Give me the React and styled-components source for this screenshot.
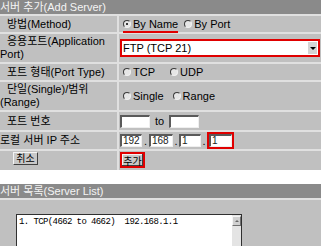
import React from 'react';
import styled, {createGlobalStyle} from 'styled-components';

const GlobalStyle = createGlobalStyle`
  body {
    margin: 0;
    background: #fff;
    font-family: "Liberation Sans", "Noto Sans CJK KR", sans-serif;
    font-size: 11px;
    color: #000;
  }
`;

const Page = styled.div`
  width: 321px;
  height: 246px;
  overflow: hidden;
`;

const FormGrid = styled.div`
  display: grid;
  grid-template-columns: 117px 1fr;
  grid-template-rows: 14px 16px 28px 16px 28px 18px 17px 19px;
  gap: 2px;
  background: #e0e0e0;
`;

const SectionHeader = styled.div`
  grid-column: 1 / -1;
  background: #8a8a8a;
  color: #f4f4f4;
  font-size: 11px;
  line-height: 14px;
  height: 14px;
  white-space: nowrap;
`;

const LabelCell = styled.div`
  background: #c0c0c0;
  display: flex;
  align-items: ${p => p.$top ? 'flex-start' : 'center'};
  text-indent: ${p => p.$indent ?? 7}px;
  line-height: 13px;
  white-space: nowrap;
`;

const FieldCell = styled.div`
  background: #c0c0c0;
  display: flex;
  align-items: ${p => p.$top ? 'flex-start' : 'center'};
  padding-left: 1px;
  white-space: nowrap;
`;

const Options = styled.div`
  display: flex;
  align-items: center;
  gap: ${p => p.$gap}px;
  margin-left: 3px;
`;

const Option = styled.label`
  display: inline-flex;
  align-items: center;
  gap: 2px;
  height: 14px;
  border-bottom: ${p => p.$marked ? '2px solid #e00000' : '0'};
  margin-bottom: ${p => p.$marked ? '-2px' : '0'};
`;

const Radio = styled.span`
  position: relative;
  width: 6px;
  height: 6px;
  border-radius: 50%;
  border: 1px solid;
  border-color: #3a3a3a #f0f0f0 #f0f0f0 #3a3a3a;
  background: #e6e6e6;
  &::after {
    content: '';
    display: ${p => p.$checked ? 'block' : 'none'};
    position: absolute;
    left: 2px;
    top: 2px;
    width: 2px;
    height: 2px;
    border-radius: 50%;
    background: #000;
  }
`;

const Select = styled.div`
  display: flex;
  align-items: center;
  justify-content: space-between;
  width: 195px;
  height: 14px;
  border: 2px solid #e00000;
  background: #fff;
  padding-left: 1px;
`;

const SelectArrow = styled.span`
  width: 9px;
  height: 12px;
  margin-right: 1px;
  display: flex;
  align-items: center;
  justify-content: center;
  background: #d4d4d4;
  &::before {
    content: '';
    border-left: 3px solid transparent;
    border-right: 3px solid transparent;
    border-top: 3px solid #000;
  }
`;

const TextBox = styled.span`
  display: inline-block;
  box-sizing: border-box;
  width: ${p => p.$w}px;
  height: 13px;
  background: #fff;
  border-style: solid;
  border-width: 2px 1px 1px 2px;
  border-color: #5a5a5a #efefef #efefef #5a5a5a;
  font-size: 10px;
  line-height: 10px;
  padding-left: 1px;
  color: #222;
`;

const Marked = styled.span`
  display: inline-flex;
  border: 2px solid #e00000;
`;

const Sep = styled.span`
  display: inline-block;
  width: ${p => p.$w}px;
  text-align: center;
`;

const Button = styled.span`
  display: inline-flex;
  align-items: center;
  justify-content: center;
  box-sizing: border-box;
  width: 25px;
  height: 13px;
  background: #c8c8c8;
  border: 1px solid;
  border-color: #f4f4f4 #404040 #404040 #f4f4f4;
  font-size: 10px;
  margin-left: ${p => p.$left ?? 0}px;
  margin-top: 1px;
`;

const RedButton = styled(Button)`
  height: 16px;
  border: 2px solid #e00000;
  box-shadow: inset -1px -1px #404040, inset 1px 1px #f4f4f4;
`;

const Spacer = styled.div`
  height: 14px;
  background: #fff;
`;

const ListSection = styled.div`
  border-top: 2px solid #e0e0e0;
  background: #c0c0c0;
  height: 60px;
  padding: 14px 0 0 16px;
`;

const ListBox = styled.div`
  display: flex;
  width: 226px;
  height: 60px;
  box-sizing: border-box;
  background: #fff;
  border: 1px solid #303030;
`;

const ListText = styled.div`
  flex: 1;
  padding: 2px 0 0 2px;
  font-family: "Liberation Mono", monospace;
  font-size: 9px;
  letter-spacing: -0.6px;
  white-space: pre;
`;

const ScrollBar = styled.div`
  width: 9px;
  background: #e4e4e4;
`;

const ScrollUp = styled.div`
  height: 8px;
  margin-top: 1px;
  background: #d0d0d0;
  border: 1px solid;
  border-color: #f4f4f4 #707070 #707070 #f4f4f4;
  display: flex;
  align-items: center;
  justify-content: center;
  &::before {
    content: '';
    border-left: 2px solid transparent;
    border-right: 2px solid transparent;
    border-bottom: 2px solid #666;
  }
`;

export default function App() {
  return (
    <Page>
      <GlobalStyle />
      <FormGrid>
        <SectionHeader>서버 추가(Add Server)</SectionHeader>

        <LabelCell>방법(Method)</LabelCell>
        <FieldCell>
          <Options $gap={6}>
            <Option $marked><Radio $checked />By Name</Option>
            <Option><Radio />By Port</Option>
          </Options>
        </FieldCell>

        <LabelCell>
          <div>응용포트(Application<br />Port)</div>
        </LabelCell>
        <FieldCell>
          <Select>FTP (TCP 21)<SelectArrow /></Select>
        </FieldCell>

        <LabelCell>포트 형태(Port Type)</LabelCell>
        <FieldCell>
          <Options $gap={15}>
            <Option><Radio />TCP</Option>
            <Option><Radio />UDP</Option>
          </Options>
        </FieldCell>

        <LabelCell>
          <div>단일(Single)/범위<br />(Range)</div>
        </LabelCell>
        <FieldCell>
          <Options $gap={9}>
            <Option><Radio />Single</Option>
            <Option><Radio />Range</Option>
          </Options>
        </FieldCell>

        <LabelCell>포트 번호</LabelCell>
        <FieldCell>
          <TextBox $w={30} />
          <Sep $w={19}>to</Sep>
          <TextBox $w={30} />
        </FieldCell>

        <LabelCell $indent={0}>로컬 서버 IP 주소</LabelCell>
        <FieldCell>
          <TextBox $w={22}>192</TextBox>
          <Sep $w={7}>.</Sep>
          <TextBox $w={24}>168</TextBox>
          <Sep $w={6}>.</Sep>
          <TextBox $w={22}>1</TextBox>
          <Sep $w={6}>.</Sep>
          <Marked><TextBox $w={23}>1</TextBox></Marked>
        </FieldCell>

        <LabelCell $indent={0} $top>
          <Button $left={13}>취소</Button>
        </LabelCell>
        <FieldCell $top>
          <RedButton>추가</RedButton>
        </FieldCell>
      </FormGrid>

      <Spacer />
      <SectionHeader>서버 목록(Server List)</SectionHeader>
      <ListSection>
        <ListBox>
          <ListText>{'1. TCP(4662 to 4662)  192.168.1.1'}</ListText>
          <ScrollBar><ScrollUp /></ScrollBar>
        </ListBox>
      </ListSection>
    </Page>
  );
}
